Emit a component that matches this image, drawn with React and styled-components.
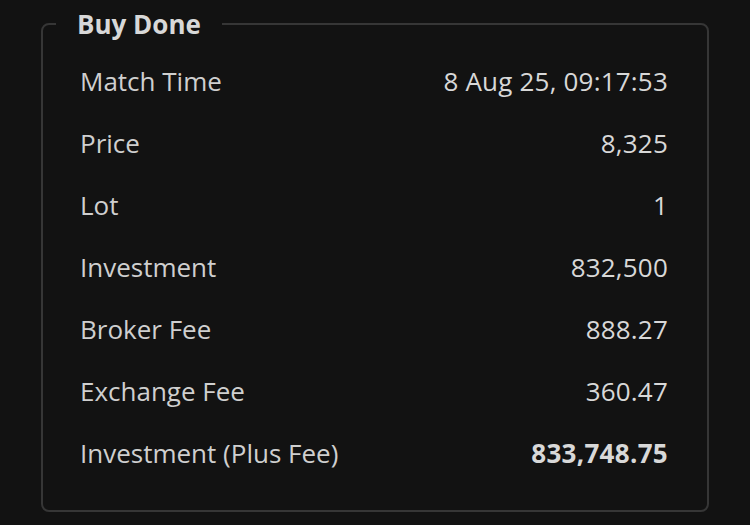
import React from "react";
import styled, { createGlobalStyle } from "styled-components";

const GlobalStyle = createGlobalStyle`
  html, body {
    margin: 0;
    padding: 0;
    background: #121212;
  }
  body {
    font-family: "Open Sans", Lato, sans-serif;
    -webkit-font-smoothing: antialiased;
  }
`;

const Page = styled.div`
  width: 750px;
  height: 525px;
  padding: 8px 41px 0;
  box-sizing: border-box;
  background: #121212;
`;

const Card = styled.fieldset`
  margin: 0;
  padding: 10px 0 26px;
  border: 2px solid #363636;
  border-radius: 8px;
  min-width: 0;
`;

const Title = styled.legend`
  margin-left: 13px;
  padding: 0 21px;
  font-size: 26px;
  line-height: 32px;
  font-weight: 700;
  color: #d8d8d8;
`;

const Row = styled.div`
  height: 62px;
  padding: 0 39px 0 37px;
  display: flex;
  align-items: center;
  justify-content: space-between;
  font-size: 26px;
`;

const Label = styled.span`
  color: #cfcfcf;
`;

const Value = styled.span`
  color: #d8d8d8;
  font-weight: ${props => (props.$strong ? 700 : 400)};
  letter-spacing: ${props => (props.$strong ? "0.3px" : "0.2px")};
`;

const rows = [
  { label: "Match Time", value: "8 Aug 25, 09:17:53" },
  { label: "Price", value: "8,325" },
  { label: "Lot", value: "1" },
  { label: "Investment", value: "832,500" },
  { label: "Broker Fee", value: "888.27" },
  { label: "Exchange Fee", value: "360.47" },
  { label: "Investment (Plus Fee)", value: "833,748.75", strong: true },
];

const App = () => {
  return (
    <Page>
      <GlobalStyle />
      <Card>
        <Title>Buy Done</Title>
        {rows.map(row => (
          <Row key={row.label}>
            <Label>{row.label}</Label>
            <Value $strong={row.strong}>{row.value}</Value>
          </Row>
        ))}
      </Card>
    </Page>
  );
};

export default App;
